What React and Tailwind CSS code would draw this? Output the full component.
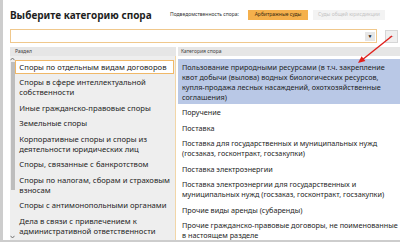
import React from 'react';

const sections = [
  { lines: ['Споры по отдельным видам договоров'], active: true },
  { lines: ['Споры в сфере интеллектуальной', 'собственности'] },
  { lines: ['Иные гражданско-правовые споры'] },
  { lines: ['Земельные споры'] },
  { lines: ['Корпоративные споры и споры из', 'деятельности юридических лиц'] },
  { lines: ['Споры, связанные с банкротством'] },
  { lines: ['Споры по налогам, сборам и страховым', 'взносам'] },
  { lines: ['Споры с антимонопольными органами'] },
  { lines: ['Дела в связи с привлечением к', 'административной ответственности'] },
];

const categories = [
  {
    lines: [
      'Пользование природными ресурсами (в т.ч. закрепление',
      'квот добычи (вылова) водных биологических ресурсов,',
      'купля-продажа лесных насаждений, охотхозяйственные',
      'соглашения)',
    ],
    active: true,
  },
  { lines: ['Поручение'] },
  { lines: ['Поставка'] },
  { lines: ['Поставка для государственных и муниципальных нужд', '(госзаказ, госконтракт, госзакупки)'] },
  { lines: ['Поставка электроэнергии'] },
  { lines: ['Поставка электроэнергии для государственных и', 'муниципальных нужд (госзаказ, госконтракт, госзакупки)'] },
  { lines: ['Прочие виды аренды (субаренды)'] },
  { lines: ['Прочие гражданско-правовые договоры, не поименованные', 'в настоящем разделе'] },
];

const Lines = ({ lines }) =>
  lines.map((line, i) => (
    <div key={i} className="whitespace-nowrap">
      {line}
    </div>
  ));

const App = () => {
  return (
    <div className="relative h-[248px] w-[400px] overflow-hidden bg-white font-['Noto_Sans',sans-serif] text-[#1e1e1e]">
      <div className="flex h-[242px] flex-col border-b-2 border-l-[3px] border-[#cdcdcd]">
        <div className="flex h-[28px] items-center pl-[7px] pt-[1px]">
          <h1 className="w-[160px] whitespace-nowrap text-[10px] font-bold leading-none">Выберите категорию спора</h1>
          <span className="w-[78px] whitespace-nowrap text-[5px] text-[#333]">Подведомственность спора:</span>
          <button className="h-[10px] w-[60px] bg-[#f5b04c] text-[5px] leading-none text-[#3a2a10]">Арбитражные суды</button>
          <button className="ml-[5px] h-[10px] w-[72px] bg-[#f3f3f3] text-[5px] leading-none text-[#c4c4c4]">
            Суды общей юрисдикции
          </button>
        </div>

        <div className="mt-[1px] flex h-[14px] items-center pl-[7px]">
          <div className="flex h-[14px] w-[367px] items-center justify-end border border-[#f0c88c] bg-white pr-[1px]">
            <div className="flex h-[9px] w-[10px] items-center justify-center bg-[#e6e6e6] text-[5px] leading-none text-[#111]">▼</div>
          </div>
          <button className="ml-[8px] flex h-[13px] w-[13px] items-center justify-center border border-[#d6d6d6] bg-[#efefef] text-[6px] leading-none text-[#555]">
            ←
          </button>
        </div>

        <div className="mt-[4px] flex h-[9px] pl-[7px] text-[5px] leading-[9px] text-[#444]">
          <div className="w-[166px] bg-[#e6e6e6] pl-[5px]">Раздел</div>
          <div className="ml-[2px] flex-1 bg-[#e6e6e6] pl-[3px]">Категория спора</div>
        </div>

        <div className="flex min-h-0 flex-1 overflow-hidden pl-[7px] leading-[10px]">
          <div className="flex w-[166px] border-r border-[#f2d6a8] bg-[#eeeeee] text-[7.7px]">
            <div className="flex w-[7px] flex-col items-center pt-[1px] pb-[1px]">
              <svg width="5" height="4" viewBox="0 0 5 4">
                <path d="M0.5 3.2 L2.5 1 L4.5 3.2" fill="none" stroke="#666" strokeWidth="0.9" />
              </svg>
              <div className="mt-[1px] h-[128px] w-[4px] bg-[#bdbdbd]" />
              <div className="flex-1" />
              <svg width="5" height="4" viewBox="0 0 5 4">
                <path d="M0.5 0.8 L2.5 3 L4.5 0.8" fill="none" stroke="#666" strokeWidth="0.9" />
              </svg>
            </div>
            <div className="flex-1 pt-[2.5px] pr-[1px]">
              {sections.map((item, i) =>
                item.active ? (
                  <div key={i} className="mt-[1px] mb-[0.5px] border border-[#f0b868] bg-white px-[3px] py-[1px]">
                    <Lines lines={item.lines} />
                  </div>
                ) : (
                  <div key={i} className="px-[4px] pt-[3px] pb-[2.5px]">
                    <Lines lines={item.lines} />
                  </div>
                )
              )}
            </div>
          </div>

          <div className="flex-1 bg-white pt-[2.5px] pl-[2px] text-[7.25px]">
            {categories.map((item, i) => (
              <div
                key={i}
                className={item.active ? 'bg-[#b9c8e6] px-[4px] pt-[3px] pb-[2.5px]' : 'px-[4px] pt-[3px] pb-[2.5px]'}
              >
                <Lines lines={item.lines} />
              </div>
            ))}
          </div>
        </div>
      </div>

      <svg className="pointer-events-none absolute inset-0" width="400" height="248" viewBox="0 0 400 248">
        <line x1="392" y1="36" x2="362" y2="60" stroke="#e0201c" strokeWidth="1.4" />
        <polygon points="358,63 365.4,61 361.6,56.3" fill="#e0201c" />
      </svg>
    </div>
  );
};

export default App;
